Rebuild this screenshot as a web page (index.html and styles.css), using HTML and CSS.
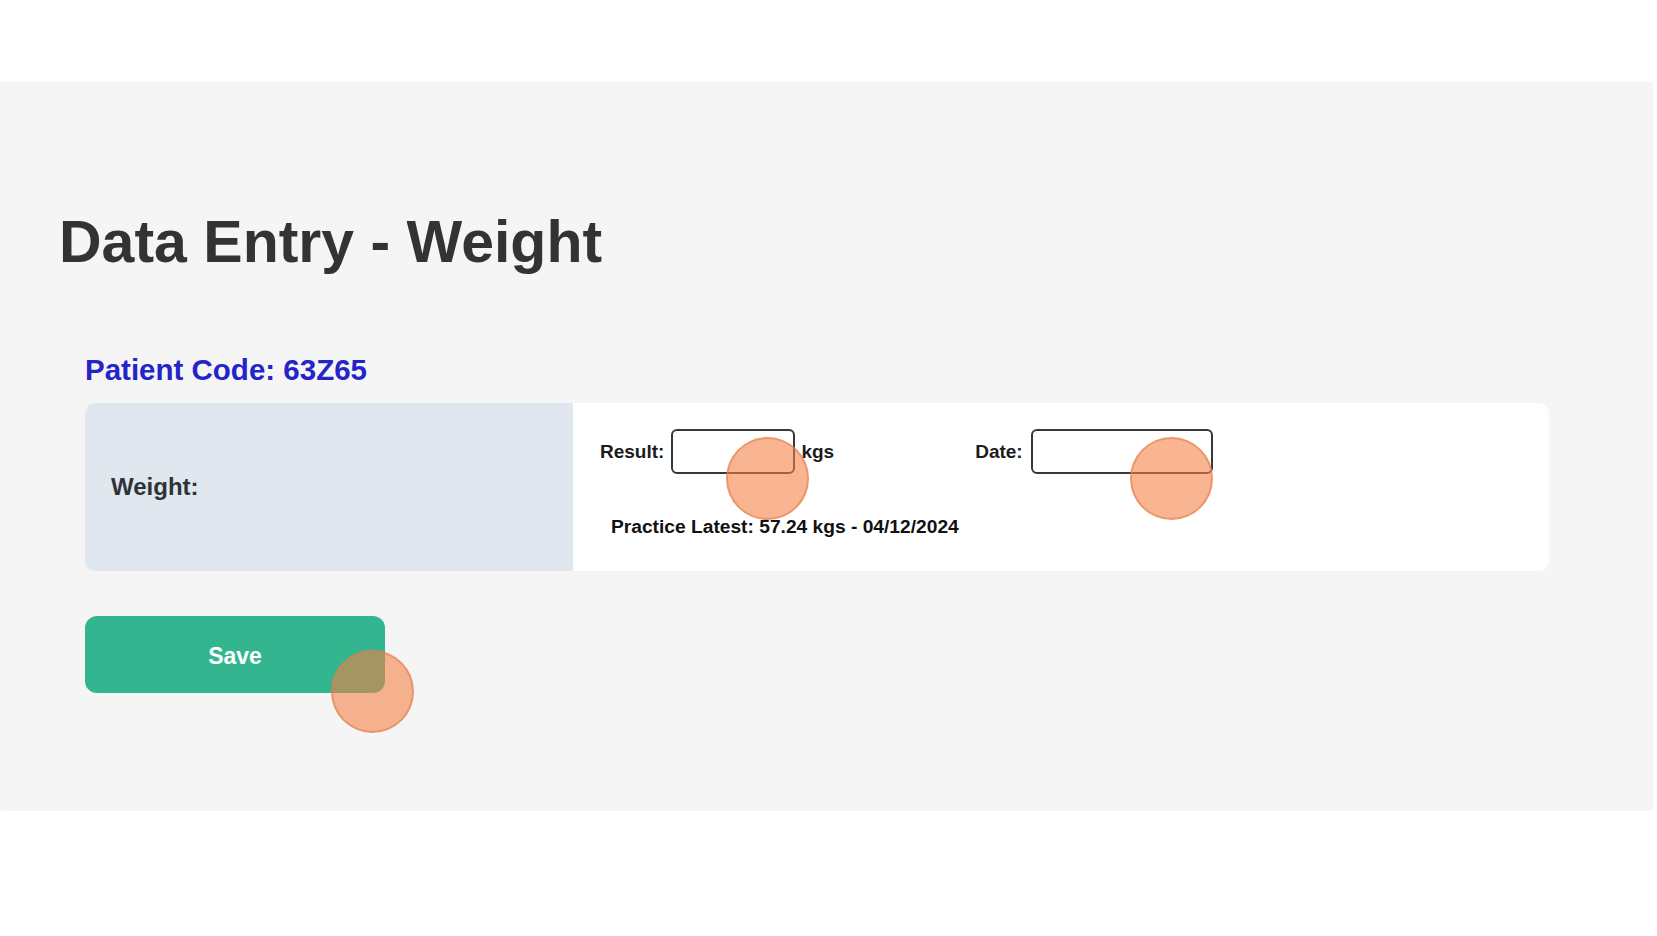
FILE: index.html
```html
<!DOCTYPE html>
<html lang="en">
<head>
<meta charset="utf-8">
<title>Data Entry - Weight</title>
<link rel="stylesheet" href="styles.css">
</head>
<body>
<div class="top-space"></div>
<main class="band">
  <h1 class="title">Data Entry - Weight</h1>
  <section class="patient">
    <h2 class="patient-code">Patient Code: 63Z65</h2>
    <div class="card">
      <div class="card-label">Weight:</div>
      <div class="card-body">
        <div class="entry-row">
          <div class="field">
            <label class="field-label">Result:</label>
            <input class="field-input result-input" type="text">
            <span class="unit">kgs</span>
          </div>
          <div class="field date-field">
            <label class="field-label">Date:</label>
            <input class="field-input date-input" type="text">
          </div>
        </div>
        <p class="latest">Practice Latest: 57.24 kgs - 04/12/2024</p>
      </div>
    </div>
    <button class="save-btn" type="button">Save</button>
  </section>
</main>
<div class="touch touch-1"></div>
<div class="touch touch-2"></div>
<div class="touch touch-3"></div>
</body>
</html>
```

FILE: styles.css
```css
html, body {
  margin: 0;
  padding: 0;
  background: #ffffff;
  font-family: "Liberation Sans", Arial, Helvetica, sans-serif;
}

body {
  position: relative;
  width: 1657px;
  height: 936px;
  overflow: hidden;
}

.top-space {
  height: 82px;
}

.band {
  width: 1652px;
  height: 727px;
  box-sizing: border-box;
  background: #f5f5f5;
  padding: 126px 0 0 0;
  box-shadow: 0 1px 2px rgba(0, 0, 0, 0.07), 1px 0 2px rgba(0, 0, 0, 0.04);
}

.title {
  margin: 0 0 0 59px;
  font-size: 59px;
  line-height: 68px;
  font-weight: bold;
  color: #333333;
}

.patient {
  margin: 77px 0 0 85px;
}

.patient-code {
  margin: 0 0 16px 0;
  font-size: 29.5px;
  line-height: 34px;
  font-weight: bold;
  color: #2424c8;
}

.card {
  display: flex;
  width: 1464px;
  height: 168px;
  border-radius: 10px;
  overflow: hidden;
  background: #ffffff;
}

.card-label {
  width: 488px;
  flex: none;
  display: flex;
  align-items: center;
  box-sizing: border-box;
  padding-left: 26px;
  background: #e1e7ee;
  font-size: 24px;
  font-weight: bold;
  color: #2e3338;
}

.card-body {
  flex: 1;
  box-sizing: border-box;
  padding: 26px 0 0 27px;
}

.entry-row {
  display: flex;
  align-items: center;
  height: 45px;
}

.field {
  display: flex;
  align-items: center;
}

.field-label {
  font-size: 19px;
  font-weight: bold;
  color: #1c1c1c;
}

.field-input {
  box-sizing: border-box;
  height: 45px;
  margin: 0 0 0 7px;
  padding: 0 8px;
  border: 2.5px solid #383838;
  border-radius: 6px;
  background: #ffffff;
  font-family: inherit;
  font-size: 18px;
  outline: none;
}

.result-input {
  width: 124px;
}

.date-input {
  width: 182px;
  margin-left: 8px;
}

.unit {
  margin-left: 6px;
  font-size: 19px;
  font-weight: bold;
  color: #1c1c1c;
}

.date-field {
  margin-left: 141px;
}

.latest {
  margin: 42px 0 0 11px;
  font-size: 19.2px;
  line-height: 22px;
  font-weight: bold;
  color: #111111;
}

.save-btn {
  display: block;
  margin-top: 45px;
  width: 300px;
  height: 77px;
  padding: 3px 0 0 0;
  border: none;
  border-radius: 12px;
  background: #33b68f;
  color: #ffffff;
  font-family: inherit;
  font-size: 23px;
  font-weight: bold;
  cursor: pointer;
}

/* touch indicators overlaid on the page */
.touch {
  position: absolute;
  width: 83px;
  height: 83px;
  box-sizing: border-box;
  border-radius: 50%;
  background: rgba(245, 127, 66, 0.58);
  border: 2px solid rgba(225, 125, 75, 0.55);
}

.touch-1 {
  left: 726px;
  top: 437px;
}

.touch-2 {
  left: 1130px;
  top: 437px;
}

.touch-3 {
  left: 331px;
  top: 650px;
}
```
